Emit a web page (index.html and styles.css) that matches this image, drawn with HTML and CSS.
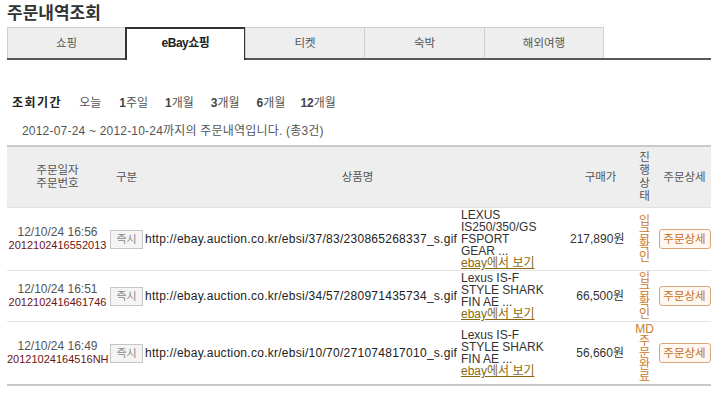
FILE: index.html
```html
<!DOCTYPE html>
<html lang="ko">
<head>
<meta charset="utf-8">
<title>주문내역조회</title>
<link rel="stylesheet" href="styles.css">
</head>
<body>
<div class="page">
  <h1 class="title">주문내역조회</h1>
  <ul class="tabs">
    <li class="tab t1">쇼핑</li>
    <li class="tab t2 active">eBay쇼핑</li>
    <li class="tab t3">티켓</li>
    <li class="tab t4">숙박</li>
    <li class="tab t5">해외여행</li>
  </ul>
  <div class="period">
    <span class="period-label">조회기간</span>
    <span class="opt">오늘</span>
    <span class="opt opt-week"><b>1</b>주일</span>
    <span class="opt"><b>1</b>개월</span>
    <span class="opt"><b>3</b>개월</span>
    <span class="opt"><b>6</b>개월</span>
    <span class="opt opt-last"><b>12</b>개월</span>
  </div>
  <p class="range">2012-07-24 ~ 2012-10-24까지의 주문내역입니다. (총3건)</p>
  <table class="orders">
    <colgroup>
      <col class="w-date">
      <col class="w-type">
      <col class="w-img">
      <col class="w-name">
      <col class="w-price">
      <col class="w-status">
      <col class="w-detail">
    </colgroup>
    <thead>
      <tr>
        <th>주문일자<br>주문번호</th>
        <th>구분</th>
        <th colspan="2">상품명</th>
        <th>구매가</th>
        <th class="th-status">진<br>행<br>상<br>태</th>
        <th>주문상세</th>
      </tr>
    </thead>
    <tbody>
      <tr>
        <td class="c-date"><span class="date">12/10/24 16:56</span><br><span class="ono">2012102416552013</span></td>
        <td class="c-type"><button class="btn-now">즉시</button></td>
        <td class="c-img">http://ebay.auction.co.kr/ebsi/37/83/230865268337_s.gif</td>
        <td class="c-name">LEXUS<br>IS250/350/GS<br>FSPORT<br>GEAR ...<br><a class="ebay-link" href="#">ebay에서 보기</a></td>
        <td class="c-price">217,890원</td>
        <td class="c-status">입<br>금<br>확<br>인</td>
        <td class="c-detail"><button class="btn-detail">주문상세</button></td>
      </tr>
      <tr>
        <td class="c-date"><span class="date">12/10/24 16:51</span><br><span class="ono">2012102416461746</span></td>
        <td class="c-type"><button class="btn-now">즉시</button></td>
        <td class="c-img">http://ebay.auction.co.kr/ebsi/34/57/280971435734_s.gif</td>
        <td class="c-name">Lexus IS-F<br>STYLE SHARK<br>FIN AE ...<br><a class="ebay-link" href="#">ebay에서 보기</a></td>
        <td class="c-price">66,500원</td>
        <td class="c-status">입<br>금<br>확<br>인</td>
        <td class="c-detail"><button class="btn-detail">주문상세</button></td>
      </tr>
      <tr>
        <td class="c-date"><span class="date">12/10/24 16:49</span><br><span class="ono">20121024164516NH</span></td>
        <td class="c-type"><button class="btn-now">즉시</button></td>
        <td class="c-img">http://ebay.auction.co.kr/ebsi/10/70/271074817010_s.gif</td>
        <td class="c-name">Lexus IS-F<br>STYLE SHARK<br>FIN AE ...<br><a class="ebay-link" href="#">ebay에서 보기</a></td>
        <td class="c-price">56,660원</td>
        <td class="c-status">MD<br>주<br>문<br>완<br>료</td>
        <td class="c-detail"><button class="btn-detail">주문상세</button></td>
      </tr>
    </tbody>
  </table>
</div>
</body>
</html>
```

FILE: styles.css
```css
html, body {
  margin: 0;
  padding: 0;
  background: #fff;
}
body {
  font-family: "Liberation Sans", "Noto Sans CJK KR", sans-serif;
  font-size: 12px;
  color: #333;
}
.page {
  width: 704px;
  padding-left: 7px;
}
.title {
  margin: 2px 0 1px 0;
  font-size: 17px;
  line-height: 24px;
  font-weight: bold;
  color: #333;
}

/* tabs */
.tabs {
  display: flex;
  align-items: flex-start;
  list-style: none;
  margin: 0;
  padding: 0;
  height: 31px;
  border-bottom: 2px solid #585858;
}
.tab {
  box-sizing: border-box;
  height: 31px;
  margin-right: -1px;
  background: #eee;
  border: 1px solid #cfcfcf;
  border-bottom: 0;
  text-align: center;
  line-height: 30px;
  font-size: 11.5px;
  color: #555;
}
.t1 { width: 119px; }
.t2 { width: 121px; }
.t3 { width: 120px; }
.t4 { width: 121px; }
.t5 { width: 120px; }
.tab.active {
  height: 33px;
  margin-bottom: -2px;
  background: #fff;
  border: 2px solid #333;
  border-bottom: 0;
  line-height: 29px;
  font-size: 12px;
  font-weight: bold;
  color: #222;
  letter-spacing: -0.5px;
}

/* period */
.period {
  display: flex;
  gap: 17px;
  margin: 35px 0 0 5px;
  line-height: 16px;
  color: #555;
}
.period-label {
  font-weight: bold;
  color: #222;
  letter-spacing: 1.5px;
  margin-right: 0;
}
.opt-week {
  margin-left: 1px;
}
.opt-last {
  margin-left: -2px;
}
.opt b {
  color: #444;
}
.range {
  margin: 12px 0 0 15px;
  line-height: 16px;
  color: #555;
  letter-spacing: 0.2px;
}

/* table */
.orders {
  margin-top: 6px;
  width: 704px;
  table-layout: fixed;
  border-collapse: collapse;
  border-top: 2px solid #c9c9c9;
  border-bottom: 2px solid #c9c9c9;
}
.w-date { width: 101px; }
.w-type { width: 37px; }
.w-img { width: 315px; }
.w-name { width: 110px; }
.w-price { width: 61px; }
.w-status { width: 27px; }
.w-detail { width: 53px; }

.orders th {
  height: 60px;
  padding: 0;
  background: #eee;
  border-bottom: 1px solid #e2e2e2;
  font-weight: normal;
  font-size: 11.5px;
  line-height: 13px;
  color: #555;
  text-align: center;
  vertical-align: middle;
}
.orders td {
  padding: 1px 0;
  line-height: 12px;
  vertical-align: middle;
  border-bottom: 1px solid #e4e4e4;
  color: #222;
}
.orders tbody tr:last-child td {
  border-bottom: 0;
}
.orders td.c-date {
  text-align: center;
  line-height: 13px;
}
.date {
  color: #555;
}
.ono {
  color: #6b1414;
  font-size: 11px;
}
.c-type {
  text-align: center;
}
.btn-now {
  box-sizing: border-box;
  width: 33px;
  height: 19px;
  padding: 0;
  margin: 0;
  border: 1px solid #c6c6c6;
  border-radius: 0;
  background: #f4f4f4;
  font-family: inherit;
  font-size: 11px;
  line-height: 17px;
  color: #8a8a8a;
  vertical-align: middle;
}
.c-img {
  white-space: nowrap;
  letter-spacing: 0.27px;
  color: #222;
}
.orders td.c-name {
  padding-left: 1px;
  color: #333;
}
.ebay-link {
  color: #8b6a0e;
  text-decoration: underline;
}
.orders td.c-price {
  text-align: right;
  white-space: nowrap;
  padding-right: 7px;
  color: #333;
}
.orders td.c-status {
  text-align: center;
  font-size: 12px;
  line-height: 12px;
  color: #cc7a2e;
}
.c-detail {
  text-align: center;
}
.btn-detail {
  box-sizing: border-box;
  width: 52px;
  height: 20px;
  padding: 0;
  margin: 0;
  border: 1px solid #dca67c;
  border-radius: 3px;
  background: #fff8f0;
  font-family: inherit;
  font-size: 11.5px;
  line-height: 18px;
  color: #c46f22;
  vertical-align: middle;
}
```
